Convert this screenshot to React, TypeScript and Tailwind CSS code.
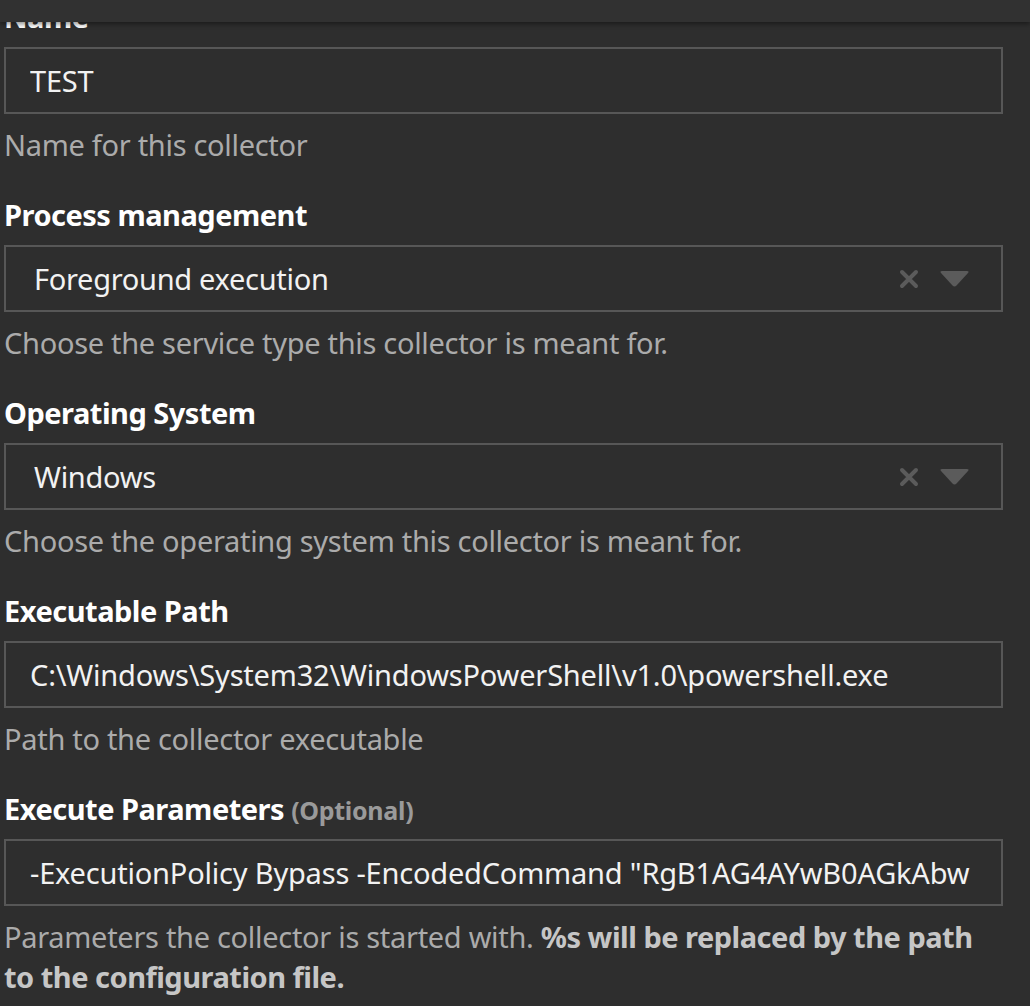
import React from "react";

const font = { fontFamily: '"Noto Sans", "Open Sans", sans-serif' };

function ClearIcon() {
  return (
    <svg width="20" height="20" viewBox="0 0 20 20" className="block">
      <path d="M3 3 L17 17 M17 3 L3 17" stroke="#5b5b5b" strokeWidth="4" strokeLinecap="round" />
    </svg>
  );
}

function CaretIcon() {
  return (
    <svg width="31" height="19" viewBox="0 0 31 19" className="block">
      <path d="M3 2 L28 2 Q30.5 2 29 4 L17.5 16.5 Q15.5 18.5 13.5 16.5 L2 4 Q0.5 2 3 2 Z" fill="#5b5b5b" />
    </svg>
  );
}

function Label({ children }: { children: React.ReactNode }) {
  return (
    <div className="h-[40px] leading-[40px] text-[29px] tracking-[-0.5px] font-bold text-white whitespace-nowrap">
      {children}
    </div>
  );
}

function Help({ children }: { children: React.ReactNode }) {
  return (
    <div className="mt-[11px] leading-[40px] text-[29px] tracking-[-0.3px] text-[#ababab]">{children}</div>
  );
}

function TextBox({ value }: { value: string }) {
  return (
    <div className="mt-[10px] h-[67px] border-2 border-[#575757] pl-[24px] pr-[31px] flex items-center overflow-hidden">
      <span className="text-[29px] tracking-[-0.2px] text-[#f2f2f2] whitespace-nowrap overflow-hidden">{value}</span>
    </div>
  );
}

function SelectBox({ value }: { value: string }) {
  return (
    <div className="mt-[10px] h-[67px] border-2 border-[#575757] pl-[28px] pr-[31px] flex items-center">
      <span className="flex-1 text-[29px] tracking-[-0.3px] text-[#f2f2f2] whitespace-nowrap">{value}</span>
      <div className="flex items-center gap-[20px]">
        <ClearIcon />
        <CaretIcon />
      </div>
    </div>
  );
}

export default function App() {
  return (
    <div className="relative w-[1030px] h-[1006px] overflow-hidden bg-[#2e2e2e]" style={font}>
      <div className="absolute top-0 left-0 right-0 h-[22px] bg-[#313131] shadow-[0_2px_5px_rgba(0,0,0,0.45)] z-10" />
      <div className="w-[999px] ml-[4px] -mt-[3px] flex flex-col gap-[30px]">
        <div>
          <Label>Name</Label>
          <TextBox value="TEST" />
          <Help>Name for this collector</Help>
        </div>
        <div>
          <Label>Process management</Label>
          <SelectBox value="Foreground execution" />
          <Help>Choose the service type this collector is meant for.</Help>
        </div>
        <div>
          <Label>Operating System</Label>
          <SelectBox value="Windows" />
          <Help>Choose the operating system this collector is meant for.</Help>
        </div>
        <div>
          <Label>Executable Path</Label>
          <TextBox value="C:\Windows\System32\WindowsPowerShell\v1.0\powershell.exe" />
          <Help>Path to the collector executable</Help>
        </div>
        <div>
          <Label>
            Execute Parameters <span className="text-[25px] tracking-[-0.3px] text-[#9a9a9a]">(Optional)</span>
          </Label>
          <TextBox value={'-ExecutionPolicy Bypass -EncodedCommand "RgB1AG4AYwB0AGkAbwBuACAARwBlAHQALQBDAG8AbgB0AGUAbgB0ACIA"'} />
          <Help>
            <span className="whitespace-nowrap">
              Parameters the collector is started with.{" "}
              <b className="font-bold text-[#c6c6c6] tracking-[-0.5px]">%s will be replaced by the path</b>
            </span>
            <br />
            <b className="font-bold text-[#c6c6c6] tracking-[-0.5px]">to the configuration file.</b>
          </Help>
        </div>
      </div>
    </div>
  );
}
